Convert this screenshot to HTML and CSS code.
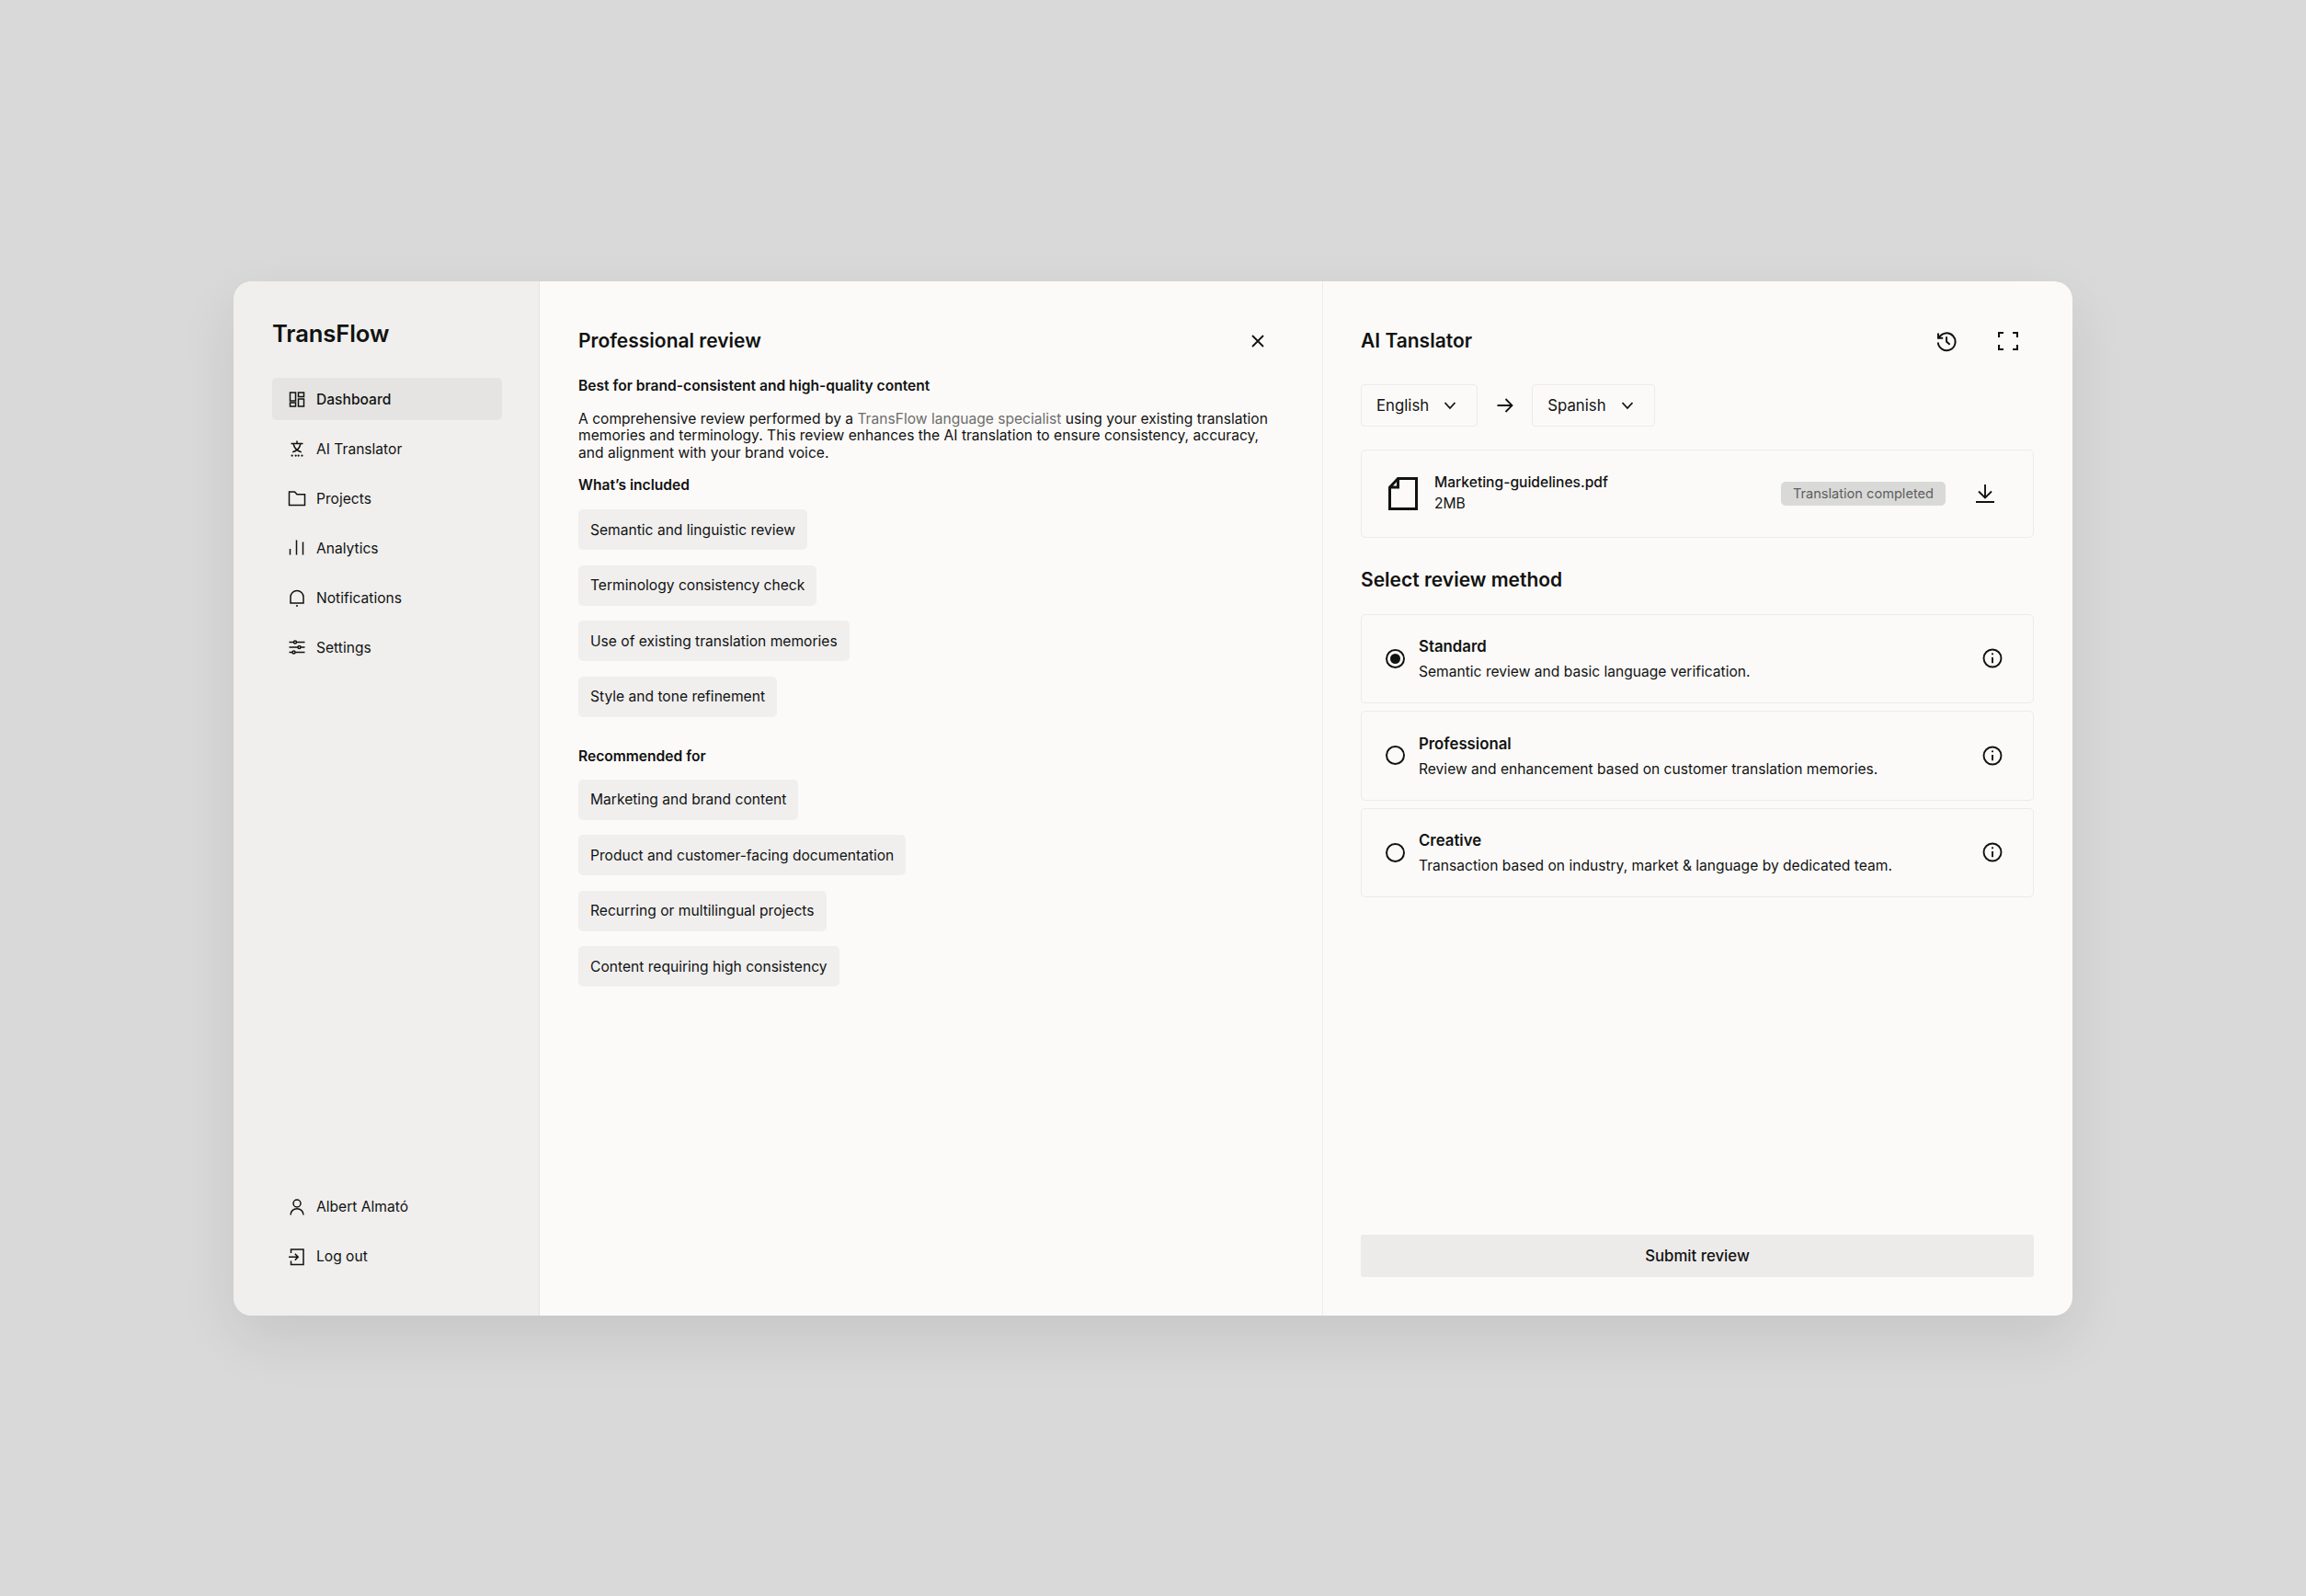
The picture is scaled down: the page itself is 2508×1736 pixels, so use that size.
FILE: index.html
```html
<!DOCTYPE html>
<html lang="en">
<head>
    <meta charset="UTF-8">
    <meta name="viewport" content="width=device-width, initial-scale=1.0">
    <title>TransFlow</title>
    <link rel="stylesheet" href="styles.css">
</head>
<body>
    <div class="app-window">
        <!-- Sidebar -->
        <aside class="sidebar">
            <div class="brand">TransFlow</div>
            <nav class="nav-list">
                <a class="nav-item active">
                    <svg class="nav-icon" viewBox="0 0 20 20"><path d="M2.500 3h6v9h-6zM11.500 3h6v4.500h-6zM11.500 10h6v8h-6zM2.500 14h6v4h-6z"/></svg>
                    <span>Dashboard</span>
                </a>
                <a class="nav-item">
                    <svg class="nav-icon" viewBox="0 0 20 20"><path d="M10 1.500v2.500M3.500 4.600h13M6.200 5.200c1 4 4.400 7.400 8.600 8.600M13.800 5.200c-1 4-4.400 7.400-8.600 8.600"/><path class="dots" d="M4.600 17.600h.1M8.600 17.600h.1M11.600 17.600h.1M15.400 17.600h.1"/></svg>
                    <span>AI Translator</span>
                </a>
                <a class="nav-item">
                    <svg class="nav-icon" viewBox="0 0 20 20"><path d="M1.500 3h6l2.500 2.800h8.500v11.700h-17z"/></svg>
                    <span>Projects</span>
                </a>
                <a class="nav-item">
                    <svg class="nav-icon" viewBox="0 0 20 20"><path d="M2.500 17.500v-6.500M9.500 17.500V1.500M16.500 17.500V3.500"/></svg>
                    <span>Analytics</span>
                </a>
                <a class="nav-item">
                    <svg class="nav-icon" viewBox="0 0 20 20"><path d="M3 16V9.500a7 7 0 0 1 14 0V16zM9 19h2"/></svg>
                    <span>Notifications</span>
                </a>
                <a class="nav-item">
                    <svg class="nav-icon" viewBox="0 0 20 20"><path d="M1.500 4.500h5M9.500 4.500h9M1.500 10h9.500M14 10h4.500M1.500 15.500h3.500M8 15.500h10.500"/><circle cx="8" cy="4.500" r="1.500"/><circle cx="12.500" cy="10" r="1.500"/><circle cx="6.500" cy="15.500" r="1.500"/></svg>
                    <span>Settings</span>
                </a>
            </nav>
            <nav class="nav-list nav-bottom">
                <a class="nav-item">
                    <svg class="nav-icon" viewBox="0 0 20 20"><circle cx="10" cy="6" r="4"/><path d="M3 18.500c0-4 3-6.700 7-6.700s7 2.700 7 6.700"/></svg>
                    <span>Albert Almató</span>
                </a>
                <a class="nav-item">
                    <svg class="nav-icon" viewBox="0 0 20 20"><path d="M3.500 6V2h13.500v16.500H3.500v-4M1 10.200h10M7.800 6.800l3.400 3.400-3.400 3.400"/></svg>
                    <span>Log out</span>
                </a>
            </nav>
        </aside>

        <!-- Review details -->
        <section class="panel panel-review">
            <div class="panel-header">
                <h2>Professional review</h2>
                <svg class="header-icon close-icon" viewBox="0 0 24 24"><path d="M6 6l12 12M18 6L6 18"/></svg>
            </div>
            <p class="sub-title best-for">Best for brand-consistent and high-quality content</p>
            <p class="description">A comprehensive review performed by a <span class="link-text">TransFlow language specialist</span> using your existing translation memories and terminology. This review enhances the AI translation to ensure consistency, accuracy, and alignment with your brand voice.</p>
            <p class="sub-title included">What’s included</p>
            <ul class="chip-list">
                <li class="chip">Semantic and linguistic review</li>
                <li class="chip">Terminology consistency check</li>
                <li class="chip">Use of existing translation memories</li>
                <li class="chip">Style and tone refinement</li>
            </ul>
            <p class="sub-title recommended">Recommended for</p>
            <ul class="chip-list chip-list-tight">
                <li class="chip">Marketing and brand content</li>
                <li class="chip">Product and customer-facing documentation</li>
                <li class="chip">Recurring or multilingual projects</li>
                <li class="chip">Content requiring high consistency</li>
            </ul>
        </section>

        <!-- Translator -->
        <section class="panel panel-translator">
            <div class="panel-header">
                <h2>AI Tanslator</h2>
                <div class="header-actions">
                    <svg class="header-icon" viewBox="0 0 24 24"><path d="M3.800 8.500A9.400 9.400 0 1 1 2.800 13.500M3 3.600v5.200h5.200M12 7.200v5.400l3.600 3.200"/></svg>
                    <svg class="expand-icon" viewBox="0 0 22 20"><path d="M1 6V1h5M16 1h5v5M21 14v5h-5M6 19H1v-5"/></svg>
                </div>
            </div>
            <div class="lang-row">
                <div class="lang-select">English <svg class="chevron" viewBox="0 0 16 16"><path d="M2.500 5l5.500 6 5.500-6"/></svg></div>
                <svg class="lang-arrow" viewBox="0 0 20 20"><path d="M1.500 10h16M10.500 3l7 7-7 7"/></svg>
                <div class="lang-select">Spanish <svg class="chevron" viewBox="0 0 16 16"><path d="M2.500 5l5.500 6 5.500-6"/></svg></div>
            </div>
            <div class="file-card">
                <svg class="file-icon" viewBox="0 0 32 36"><path d="M10.500 1.500H30.500V34.500H1.500V11zM10.500 1.500V11H1.500"/></svg>
                <div class="file-info">
                    <div class="file-name">Marketing-guidelines.pdf</div>
                    <div class="file-size">2MB</div>
                </div>
                <span class="status-badge">Translation completed</span>
                <svg class="download-icon" viewBox="0 0 20 20"><path d="M10 0v14M3 7.500l7 7 7-7M0 19h20"/></svg>
            </div>
            <h3 class="section-title">Select review method</h3>
            <div class="option-list">
                <div class="option-card">
                    <span class="radio checked"></span>
                    <div class="option-text">
                        <div class="option-title">Standard</div>
                        <div class="option-desc">Semantic review and basic language verification.</div>
                    </div>
                    <svg class="info-icon" viewBox="0 0 22 22"><circle cx="11" cy="11" r="9.500"/><path d="M11 10v6.200"/><path class="dots" d="M11 6.300h.01"/></svg>
                </div>
                <div class="option-card">
                    <span class="radio"></span>
                    <div class="option-text">
                        <div class="option-title">Professional</div>
                        <div class="option-desc">Review and enhancement based on customer translation memories.</div>
                    </div>
                    <svg class="info-icon" viewBox="0 0 22 22"><circle cx="11" cy="11" r="9.500"/><path d="M11 10v6.200"/><path class="dots" d="M11 6.300h.01"/></svg>
                </div>
                <div class="option-card">
                    <span class="radio"></span>
                    <div class="option-text">
                        <div class="option-title">Creative</div>
                        <div class="option-desc">Transaction based on industry, market &amp; language by dedicated team.</div>
                    </div>
                    <svg class="info-icon" viewBox="0 0 22 22"><circle cx="11" cy="11" r="9.500"/><path d="M11 10v6.200"/><path class="dots" d="M11 6.300h.01"/></svg>
                </div>
            </div>
            <button class="submit-btn" type="button">Submit review</button>
        </section>
    </div>
</body>
</html>
```

FILE: styles.css
```css
* {
    box-sizing: border-box;
}

body {
    margin: 0;
    height: 1736px;
    display: flex;
    align-items: center;
    justify-content: center;
    background-color: #d9d9d9;
    font-family: Inter, "Liberation Sans", sans-serif;
    font-size: 15.6px;
    color: #111212;
}

svg {
    fill: none;
    stroke: currentColor;
    stroke-width: 1.5;
    flex-shrink: 0;
}

h2, h3, p, ul {
    margin: 0;
    padding: 0;
}

ul {
    list-style: none;
}

.app-window {
    width: 2000px;
    height: 1125px;
    display: flex;
    border-radius: 20px;
    overflow: hidden;
    background: #fbfaf8;
    box-shadow: 0 24px 64px rgba(0,0,0,0.09);
}

/* Sidebar */
.sidebar {
    width: 333px;
    padding: 43px 40px 41px 42px;
    display: flex;
    flex-direction: column;
    background: #f0efed;
    border-right: 1px solid #e4e3e1;
}

.brand {
    height: 28px;
    margin-bottom: 34.5px;
    line-height: 28px;
    font-size: 25.6px;
    font-weight: 600;
    letter-spacing: -0.1px;
}

.nav-list {
    display: flex;
    flex-direction: column;
    gap: 8px;
}

.nav-bottom {
    margin-top: auto;
}

.nav-item {
    height: 46px;
    padding-left: 17px;
    display: flex;
    align-items: center;
    gap: 11px;
    border-radius: 5px;
}

.nav-item.active {
    background: #e5e4e2;
    font-weight: 500;
}

.nav-icon {
    width: 20px;
    height: 20px;
}

.dots {
    stroke-linecap: round;
    stroke-width: 2.2;
}

/* Panels */
.panel {
    padding: 43px 42px 42px;
    display: flex;
    flex-direction: column;
}

.panel-review {
    width: 852px;
    padding-right: 43px;
    align-items: flex-start;
    border-right: 1px solid #ecebe9;
}

.panel-translator {
    flex: 1;
    padding-left: 41px;
}

.panel-header {
    width: 100%;
    height: 44px;
    display: flex;
    align-items: center;
    justify-content: space-between;
}

.panel-header h2 {
    font-size: 21px;
    font-weight: 600;
}

.header-actions {
    display: flex;
    align-items: center;
    gap: 44px;
    margin-right: 17px;
}

.header-icon {
    width: 24px;
    height: 24px;
    stroke-width: 2;
}

.expand-icon {
    width: 22px;
    height: 20px;
    stroke-width: 2.2;
}

.close-icon {
    margin-right: 15px;
    stroke-width: 1.8;
}

.sub-title {
    line-height: 20px;
    font-weight: 600;
}

.best-for {
    margin-top: 17px;
}

.included {
    margin-top: 16px;
}

.recommended {
    margin-top: 33px;
}

.description {
    margin-top: 17px;
    line-height: 18.6px;
}

.link-text {
    color: #6d6d6c;
}

.chip-list {
    margin-top: 16px;
    display: flex;
    flex-direction: column;
    align-items: flex-start;
    gap: 16.5px;
}

.chip-list-tight {
    margin-top: 15px;
}

.chip {
    height: 44px;
    padding: 0 13px;
    display: flex;
    align-items: center;
    border-radius: 5px;
    background: #f0efee;
}

/* Language selects */
.lang-row {
    margin-top: 25px;
    display: flex;
    align-items: center;
}

.lang-select {
    height: 46px;
    padding: 0 21px 0 16px;
    display: flex;
    align-items: center;
    gap: 15px;
    border: 1px solid #ecebe9;
    border-radius: 4px;
    font-size: 16.8px;
}

.chevron {
    width: 16px;
    height: 16px;
    stroke-width: 1.8;
}

.lang-arrow {
    width: 20px;
    height: 20px;
    margin: 0 19px 0 20px;
    stroke-width: 1.8;
}

/* File card */
.file-card {
    margin-top: 25px;
    height: 96px;
    padding: 0 42px 0 29px;
    display: flex;
    align-items: center;
    border: 1px solid #ecebe9;
    border-radius: 5px;
}

.file-icon {
    width: 32px;
    height: 36px;
    stroke-width: 3;
}

.file-info {
    margin-left: 18px;
    flex: 1;
}

.file-name {
    line-height: 22px;
    font-weight: 500;
}

.file-size {
    line-height: 22px;
    margin-top: 1px;
}

.status-badge {
    height: 26px;
    padding: 0 13px;
    display: flex;
    align-items: center;
    border-radius: 5px;
    background: #d9d9d8;
    color: #5e5e5e;
    font-size: 14.6px;
}

.download-icon {
    width: 20px;
    height: 20px;
    margin-left: 33px;
    stroke-width: 1.9;
}

/* Review options */
.section-title {
    margin-top: 32px;
    line-height: 28px;
    font-size: 21px;
    font-weight: 600;
}

.option-list {
    margin-top: 23px;
    display: flex;
    flex-direction: column;
    gap: 8px;
}

.option-card {
    height: 97.5px;
    padding: 0 33px 0 26px;
    display: flex;
    align-items: center;
    border: 1px solid #ecebe9;
    border-radius: 5px;
}

.radio {
    position: relative;
    width: 21px;
    height: 21px;
    border: 2px solid #111212;
    border-radius: 50%;
}

.radio.checked::after {
    content: "";
    position: absolute;
    inset: 3px;
    border-radius: 50%;
    background: #111212;
}

.option-text {
    flex: 1;
    margin-left: 15px;
    padding-top: 2px;
}

.option-title {
    line-height: 22px;
    font-size: 16.8px;
    font-weight: 600;
}

.option-desc {
    margin-top: 6px;
    line-height: 22px;
}

.info-icon {
    width: 22px;
    height: 22px;
    stroke-width: 1.9;
}

.submit-btn {
    margin-top: auto;
    height: 46px;
    border: none;
    border-radius: 3px;
    background: #ecebe9;
    color: #111212;
    font-family: inherit;
    font-size: 16.8px;
    font-weight: 500;
}
```
